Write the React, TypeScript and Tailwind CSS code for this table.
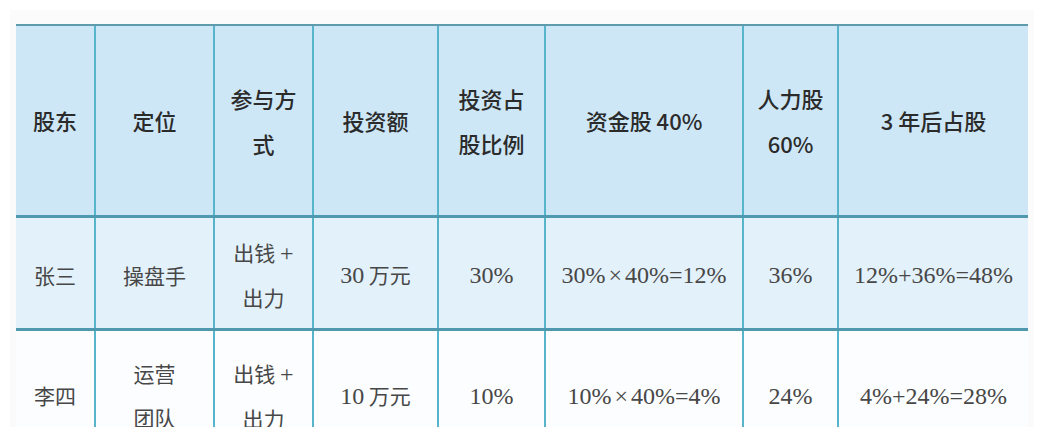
const cols = "grid-cols-[78px_119px_99px_125px_107px_198px_95px_191px]";

const header = [
  ["股东"],
  ["定位"],
  ["参与方", "式"],
  ["投资额"],
  ["投资占", "股比例"],
  ["资金股 40%"],
  ["人力股", "60%"],
  ["3 年后占股"],
];

const rows = [
  {
    bg: "bg-[#e3f1fa]",
    h: "h-[113px]",
    cells: [["张三"], ["操盘手"], ["出钱 +", "出力"], ["30 万元"], ["30%"], ["30%×40%=12%"], ["36%"], ["12%+36%=48%"]],
  },
  {
    bg: "bg-[#fbfdfe]",
    h: "h-[128px]",
    cells: [["李四"], ["运营", "团队"], ["出钱 +", "出力"], ["10 万元"], ["10%"], ["10%×40%=4%"], ["24%"], ["4%+24%=28%"]],
  },
];

// digits in the source are a tall, narrow serif; CJK stays smaller
const Mixed = ({ text }: { text: string }) => (
  <>
    {text.split(/([0-9%=+×]+)/).map((part, i) =>
      /[0-9%=+×]/.test(part) ? (
        <span key={i} className="inline-block text-[24px] [font-family:'Liberation_Serif',serif]">
          {part.split("×").map((p, j) => (
            <span key={j}>
              {j > 0 && <span className="mx-[3px]">×</span>}
              {p}
            </span>
          ))}
        </span>
      ) : (
        <span key={i}>{part}</span>
      )
    )}
  </>
);

const Cell = ({ lines, first, head }: { lines: string[]; first: boolean; head: boolean }) => (
  <div
    className={`flex flex-col items-center justify-center text-center ${first ? "" : "border-l-2 border-[#58b4cb]"} ${
      head
        ? "text-[22px] font-medium leading-[45px] text-[#2b2b2b] [font-family:'Noto_Sans_CJK_SC','Noto_Sans',sans-serif]"
        : "pt-[3px] text-[21px] leading-[44px] text-[#474747] [font-family:'Noto_Sans_CJK_SC',serif]"
    }`}
  >
    {lines.map((l) => (
      <span key={l} className="whitespace-nowrap">
        {head ? l : <Mixed text={l} />}
      </span>
    ))}
  </div>
);

export default function App() {
  return (
    <div className="h-[438px] w-[1044px] overflow-hidden bg-white">
      <div className="mt-[10px] ml-[10px] h-[417px] w-[1024px] overflow-hidden bg-[#fbfbfb] pt-[14px] pl-[6px]">
        <div className="w-[1012px] border-t-2 border-[#5f9cab]">
          <div className={`grid ${cols} h-[189px] bg-[#cde7f7]`}>
            {header.map((lines, i) => (
              <Cell key={i} lines={lines} first={i === 0} head />
            ))}
          </div>
          {rows.map((r, ri) => (
            <div key={ri} className={`grid ${cols} ${r.h} ${r.bg} border-t-[3px] border-[#4f98ad]`}>
              {r.cells.map((lines, i) => (
                <Cell key={i} lines={lines} first={i === 0} head={false} />
              ))}
            </div>
          ))}
        </div>
      </div>
    </div>
  );
}
